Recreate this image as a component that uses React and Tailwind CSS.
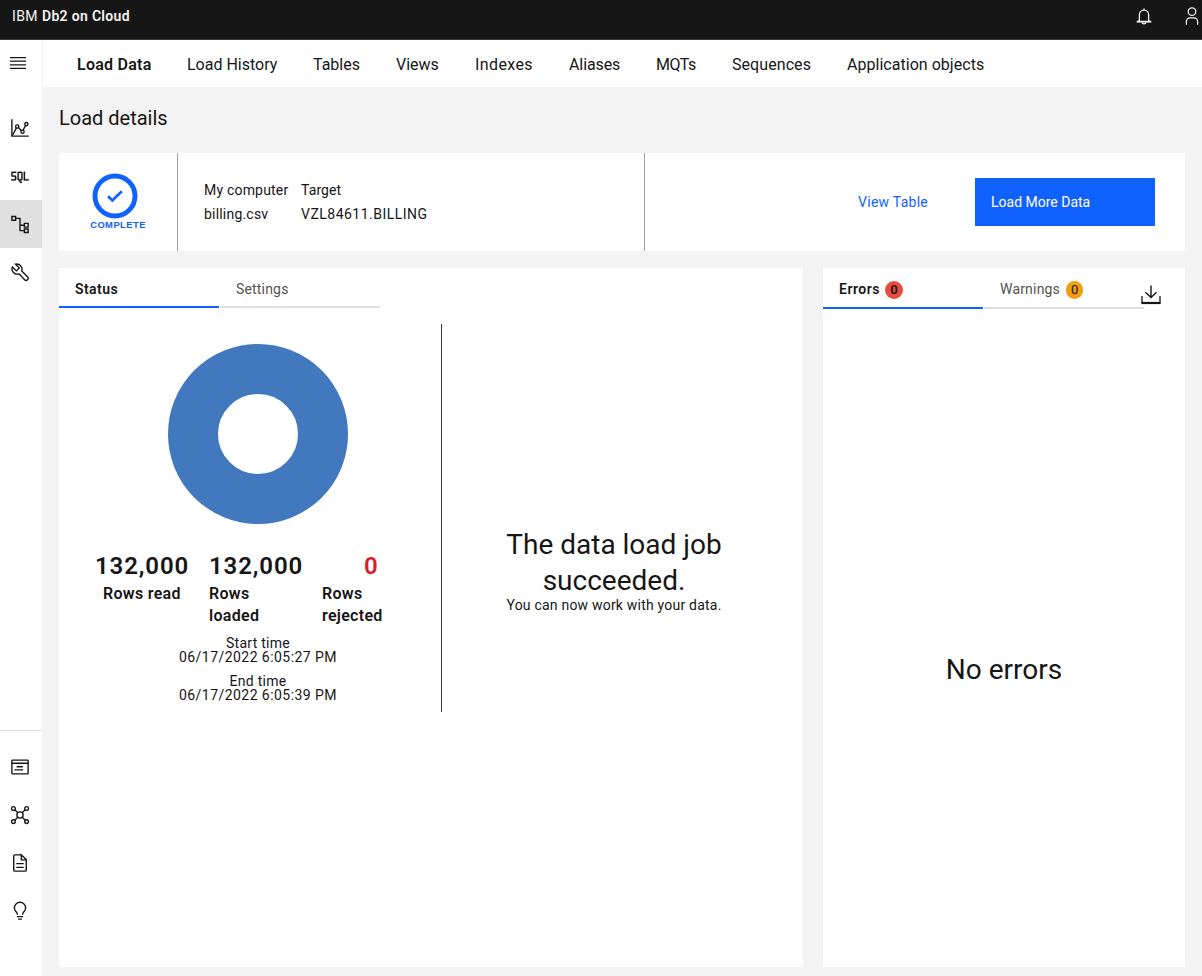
import React from 'react';

function Icon({ children, className = '' }) {
  return (
    <svg
      className={'h-5 w-5 shrink-0 ' + className}
      viewBox="0 0 32 32"
      fill="none"
      stroke="currentColor"
      strokeWidth="2.2"
    >
      {children}
    </svg>
  );
}

const MonitorIcon = () => (
  <Icon>
    <path d="M3 2v27h27" />
    <path d="M3.8 28 10.3 15.8M13.6 15.5l4.8 5M20.8 19.6l4-7.4" />
    <circle cx="11.5" cy="13.5" r="2.6" />
    <circle cx="20" cy="22" r="2.6" />
    <circle cx="26.2" cy="9.7" r="2.6" />
  </Icon>
);

const SqlIcon = () => (
  <Icon>
    <g fill="currentColor" stroke="currentColor" strokeWidth="0.4">
      <path d="M24 21V9h-2v14h8v-2z" />
      <path d="M18,9H14a2,2,0,0,0-2,2V21a2,2,0,0,0,2,2h1v2a2,2,0,0,0,2,2h2V25H17V23h1a2,2,0,0,0,2-2V11A2,2,0,0,0,18,9ZM14,21V11h4V21Z" />
      <path d="M8,23H2V21H8V17H4a2,2,0,0,1-2-2V11A2,2,0,0,1,4,9h6v2H4v4H8a2,2,0,0,1,2,2v4A2,2,0,0,1,8,23Z" />
    </g>
  </Icon>
);

const DataIcon = () => (
  <Icon>
    <path d="M3 4h6v6H3zM23 15h6v6h-6zM23 24h6v5.5h-6z" />
    <path d="M9 7h7v19.5h7M16 18h7" />
  </Icon>
);

const WrenchIcon = () => (
  <Icon>
    <path d="M8.6 3.4l6.2 6.1-4.6 4.7-6.4-6.3a8.4 8.4 0 0 0 10.6 11l9 9.4a3.2 3.2 0 0 0 4.6-4.6l-9.2-9.2A8.6 8.6 0 0 0 8.6 3.4z" />
  </Icon>
);

const ConsoleIcon = () => (
  <Icon>
    <rect x="3" y="5" width="26" height="22" rx="1" />
    <path d="M3 10h26M10.5 15.5h10M7 20.5h14" />
  </Icon>
);

const HubIcon = () => (
  <Icon>
    <circle cx="16" cy="16" r="5" />
    <circle cx="5.5" cy="5.5" r="3" />
    <circle cx="26.5" cy="5.5" r="3" />
    <circle cx="5.5" cy="26.5" r="3" />
    <circle cx="26.5" cy="26.5" r="3" />
    <path d="M7.6 7.6l4.9 4.9M24.4 7.6l-4.9 4.9M7.6 24.4l4.9-4.9M24.4 24.4l-4.9-4.9" />
  </Icon>
);

const DocumentIcon = () => (
  <Icon>
    <path d="M18 3H7.5A1.5 1.5 0 0 0 6 4.500v23A1.500 1.500 0 0 0 7.500 29h17a1.500 1.500 0 0 0 1.500-1.500V10.500L18 3v8h8" />
    <path d="M10 17h12M10 23h12" />
  </Icon>
);

const BulbIcon = () => (
  <Icon>
    <path d="M11 25h10M13 29h6" />
    <path d="M12 22c0-5-5-5-5-11a9 9 0 0 1 18 0c0 6-5 6-5 11" />
  </Icon>
);

const BellIcon = () => (
  <svg className="h-5 w-5 text-[#f4f4f4]" viewBox="0 0 20 20" fill="none" stroke="currentColor">
    <path strokeWidth="1.3" d="M10 2.600v1.600M5.400 14.500V8.800a4.600 4.600 0 0 1 9.200 0v5.700l1.600 1.100H3.800z" />
    <path strokeWidth="1.600" d="M3 15.600h14" />
    <path strokeWidth="1.400" d="M8.200 16.500a1.800 1.400 0 0 0 3.600 0" />
  </svg>
);

const UserIcon = () => (
  <svg className="h-5 w-5 shrink-0" viewBox="0 0 32 32" fill="#f4f4f4">
    <path d="M16,4a5,5,0,1,1-5,5,5,5,0,0,1,5-5m0-2a7,7,0,1,0,7,7A7,7,0,0,0,16,2Z" />
    <path d="M26,30H24V25a5,5,0,0,0-5-5H13a5,5,0,0,0-5,5v5H6V25a7,7,0,0,1,7-7h6a7,7,0,0,1,7,7Z" />
  </svg>
);

const NAV = [
  { label: 'Load Data', cls: 'w-[74px] font-semibold tracking-[0.25px]' },
  { label: 'Load History', cls: 'w-[90px]' },
  { label: 'Tables', cls: 'w-[47px]' },
  { label: 'Views', cls: 'w-[43px]' },
  { label: 'Indexes', cls: 'w-[58px] tracking-[0.4px]' },
  { label: 'Aliases', cls: 'w-[51px] tracking-[-0.1px]' },
  { label: 'MQTs', cls: 'w-[40px] tracking-[-0.4px]' },
  { label: 'Sequences', cls: 'w-[79px] tracking-[0.07px]' },
  { label: 'Application objects', cls: 'w-[138px] tracking-[0.03px]' },
];

const TOP_TOOLS = [
  { id: 'monitor', Glyph: MonitorIcon },
  { id: 'sql', Glyph: SqlIcon },
  { id: 'data', Glyph: DataIcon, active: true },
  { id: 'admin', Glyph: WrenchIcon },
];

const BOTTOM_TOOLS = [
  { id: 'console', Glyph: ConsoleIcon },
  { id: 'hub', Glyph: HubIcon },
  { id: 'docs', Glyph: DocumentIcon },
  { id: 'tips', Glyph: BulbIcon },
];

function SideItem({ Glyph, active }) {
  return (
    <div className={'flex h-12 items-center pl-2.5 ' + (active ? 'bg-[#e0e0e0]' : '')}>
      <Glyph />
    </div>
  );
}

function Header() {
  return (
    <header className="flex h-10 shrink-0 justify-between overflow-hidden border-b border-[#393939] bg-[#161616] text-sm text-[#f4f4f4]">
      <div className="flex h-8 items-center gap-1 pl-3">
        <span className="tracking-[0.4px]">IBM</span>
        <span className="font-semibold tracking-[0.32px]">Db2 on Cloud</span>
      </div>
      <div className="flex w-[68px] shrink-0 gap-7 pt-1.5">
        <BellIcon />
        <UserIcon />
      </div>
    </header>
  );
}

function Sidebar() {
  return (
    <aside className="flex w-[43px] shrink-0 flex-col border-r border-[#f3f3f3] bg-white">
      <div className="flex h-16 items-start pl-2 pt-[13px]">
        <svg className="h-5 w-5" viewBox="0 0 20 20" fill="currentColor">
          <path d="M2 14.800H18V16H2zM2 11.200H18V12.400H2zM2 7.600H18V8.800H2zM2 4H18V5.200H2z" />
        </svg>
      </div>
      {TOP_TOOLS.map((t) => (
        <SideItem key={t.id} {...t} />
      ))}
      <div className="mt-auto h-[246px] border-t border-[#e0e0e0] pt-3">
        {BOTTOM_TOOLS.map((t) => (
          <SideItem key={t.id} {...t} />
        ))}
      </div>
    </aside>
  );
}

function Summary() {
  return (
    <section className="flex h-[98px] bg-white text-sm">
      <div className="flex w-[119px] flex-col items-center border-r border-[#a0a0a0] pt-5">
        <svg className="mr-1.5 h-[46px] w-[46px]" viewBox="0 0 46 46" fill="none" stroke="#0f62fe">
          <circle cx="23" cy="23" r="20" strokeWidth="4.9" />
          <path d="M16 23.200l4.400 4.200 9.400-9.200" strokeWidth="2.800" />
        </svg>
        <span className="font-['Liberation_Sans',sans-serif] text-[9.4px] leading-3 font-bold tracking-[0.45px] text-[#0f62fe]">
          COMPLETE
        </span>
      </div>
      <div className="flex w-[467px] items-center border-r border-[#a0a0a0] pl-[26px] leading-6">
        <div className="w-[97px]">
          <div className="tracking-[0.2px]">My computer</div>
          <div className="tracking-[0.2px]">billing.csv</div>
        </div>
        <div>
          <div className="tracking-[0.1px]">Target</div>
          <div className="tracking-[0.48px]">VZL84611.BILLING</div>
        </div>
      </div>
      <div className="flex flex-1 items-center justify-end pr-[30px]">
        <a className="mr-[47px] tracking-[0.26px] text-[#0f62fe]">View Table</a>
        <button className="h-12 w-[180px] bg-[#0f62fe] pl-4 text-left text-white">
          Load More Data
        </button>
      </div>
    </section>
  );
}

function Stat({ value, label, cell, valueCls, labelCls }) {
  return (
    <div className={'flex flex-col ' + cell}>
      <span className={'text-2xl leading-[34px] font-semibold ' + valueCls}>{value}</span>
      <span className={'font-semibold leading-[22px] tracking-[0.3px] ' + labelCls}>{label}</span>
    </div>
  );
}

function Timestamp({ label, value }) {
  return (
    <div className="flex h-[38px] flex-col items-center text-sm leading-[14px]">
      <span className="tracking-[0.27px]">{label}</span>
      <span className="tracking-[0.45px]">{value}</span>
    </div>
  );
}

function StatusPanel() {
  return (
    <section className="w-[744px] bg-white">
      <div className="flex gap-px text-sm">
        <div className="flex h-10 w-40 items-center border-b-2 border-[#0f62fe] pt-1 pl-4 font-semibold tracking-[0.42px]">
          Status
        </div>
        <div className="flex h-10 w-40 items-center border-b-2 border-[#e0e0e0] pt-1 pl-4 tracking-[0.18px] text-[#525252]">
          Settings
        </div>
      </div>
      <div className="mt-4 flex h-[388px]">
        <div className="flex w-[383px] flex-col items-center border-r border-[#393939] pt-5 pl-4">
          <svg className="h-[180px] w-[180px] shrink-0" viewBox="0 0 180 180">
            <circle cx="90" cy="90" r="65" fill="none" stroke="#4178be" strokeWidth="50" />
          </svg>
          <div className="mt-[25px] flex h-[87px] w-full pl-5">
            <Stat value="132,000" label="Rows read" cell="w-[114px]" valueCls="tracking-[0.9px]" labelCls="pl-2" />
            <Stat value="132,000" label="Rows loaded" cell="w-[113px]" valueCls="tracking-[0.9px]" labelCls="w-[60px]" />
            <Stat
              value="0"
              label="Rows rejected"
              cell="w-[64px]"
              valueCls="pl-[42px] text-[#da1e28]"
              labelCls="w-[64px]"
            />
          </div>
          <Timestamp label="Start time" value="06/17/2022 6:05:27 PM" />
          <Timestamp label="End time" value="06/17/2022 6:05:39 PM" />
        </div>
        <div className="flex w-[344px] flex-col items-center pt-[203px]">
          <p className="h-[71px] w-[230px] text-center text-[28px] leading-9">
            The data load job succeeded.
          </p>
          <p className="text-sm leading-[14px] tracking-[0.21px]">You can now work with your data.</p>
        </div>
      </div>
    </section>
  );
}

function IssuesPanel() {
  return (
    <section className="flex w-[362px] flex-col bg-white">
      <div className="flex gap-px text-sm">
        <div className="flex h-[41px] w-40 items-center gap-[5px] border-b-2 border-[#0f62fe] pt-[3px] pl-4 font-semibold">
          <span className="tracking-[0.51px]">Errors</span>
          <span className="mt-px flex h-[18px] w-[18px] items-center justify-center rounded-full bg-[#e74c3c] text-[13px] leading-none">
            0
          </span>
        </div>
        <div className="flex h-[41px] w-40 items-center gap-1.5 border-b-2 border-[#e0e0e0] pt-[3px] pl-4 text-[#525252]">
          <span className="tracking-[0.19px]">Warnings</span>
          <span className="mt-px flex h-[18px] w-[17px] items-center justify-center rounded-full bg-[#f39c12] text-[13px] leading-none text-[#161616]">
            0
          </span>
        </div>
        <svg className="-ml-[5px] mt-4 h-[22px] w-[22px] shrink-0" viewBox="0 0 22 22" fill="none" stroke="#161616">
          <path d="M11 1.500v11.500M5.500 8.200l5.500 5.300 5.500-5.300" strokeWidth="1.400" />
          <path d="M2 12v7M20 12v7" strokeWidth="1.300" />
          <path d="M1.400 19h19.200" strokeWidth="2.200" />
        </svg>
      </div>
      <p className="mt-[343px] text-center text-[28px] leading-9">No errors</p>
    </section>
  );
}

export default function App() {
  return (
    <div className="flex h-[976px] w-full flex-col overflow-hidden bg-[#f3f3f3] font-['Roboto',sans-serif] text-[#161616]">
      <Header />
      <div className="flex min-h-0 flex-1">
        <Sidebar />
        <div className="flex flex-1 flex-col">
          <nav className="flex h-[47px] shrink-0 items-center gap-9 bg-white pt-[3px] pl-[34px] pr-4 whitespace-nowrap">
            {NAV.map((n) => (
              <a key={n.label} className={n.cls}>
                {n.label}
              </a>
            ))}
          </nav>
          <main className="flex flex-1 flex-col pt-4 pr-[17px] pb-[9px] pl-4">
            <h1 className="mb-5 text-xl leading-[30px]">Load details</h1>
            <Summary />
            <div className="mt-[17px] flex flex-1 gap-5">
              <StatusPanel />
              <IssuesPanel />
            </div>
          </main>
        </div>
      </div>
    </div>
  );
}
